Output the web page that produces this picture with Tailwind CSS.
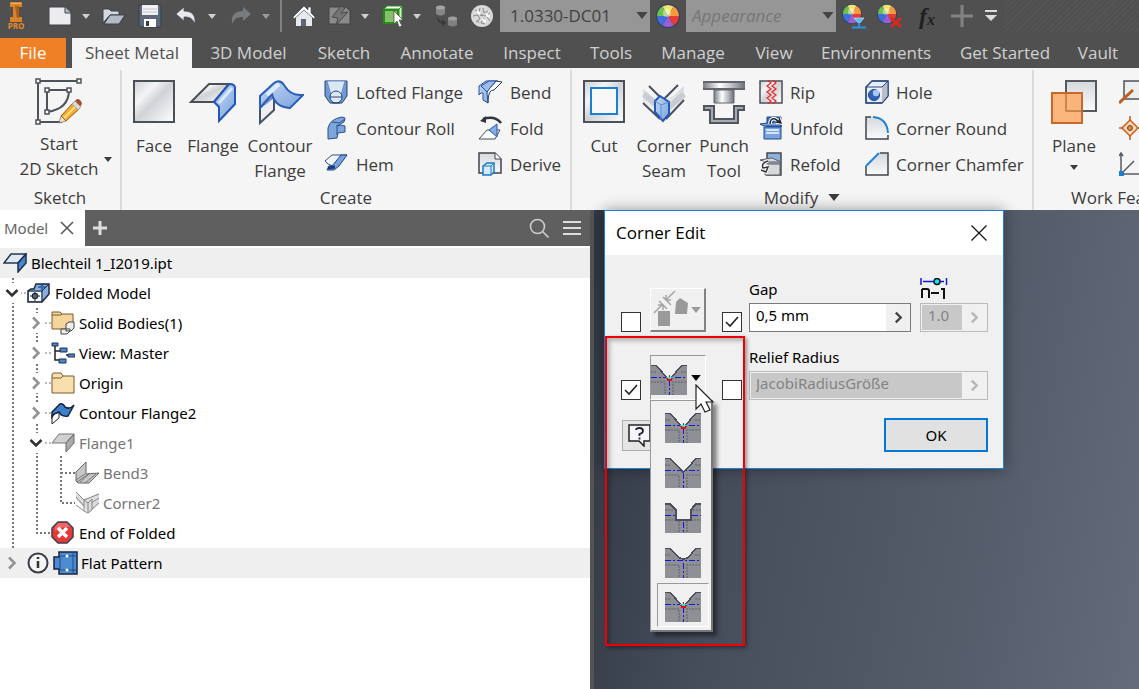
<!DOCTYPE html>
<html lang="en">
<head>
<meta charset="utf-8">
<title>Sheet Metal - Corner Edit</title>
<script src="https://cdn.jsdelivr.net/npm/@tailwindcss/browser@4"></script>
</head>
<body class="flex h-screen flex-col overflow-hidden bg-[#505050] font-['Open_Sans','Noto_Sans',sans-serif] text-[17px] text-[#3c3c3c]">

<svg class="absolute h-0 w-0" aria-hidden="true">
  <defs>
    <linearGradient id="steel" x1="0" y1="0" x2="1" y2="1"><stop offset="0" stop-color="#cfd1d4"/><stop offset=".3" stop-color="#f4f4f5"/><stop offset=".5" stop-color="#d0d2d6"/><stop offset="1" stop-color="#fff"/></linearGradient>
    <linearGradient id="sheet" x1="0" y1="0" x2="0" y2="1"><stop offset="0" stop-color="#d5d8dc"/><stop offset="1" stop-color="#fafafa"/></linearGradient>
    <linearGradient id="blue" x1="0" y1="0" x2="1" y2="1"><stop offset="0" stop-color="#c3d8f3"/><stop offset="1" stop-color="#7ba3dc"/></linearGradient>
    <linearGradient id="chrome" x1="0" y1="0" x2="1" y2="0"><stop offset="0" stop-color="#777c85"/><stop offset=".4" stop-color="#fff"/><stop offset=".7" stop-color="#b9bcc2"/><stop offset="1" stop-color="#6b7079"/></linearGradient>
    <symbol id="down" viewBox="0 0 8 5"><path d="M0 0h8L4 5z" fill="currentColor"/></symbol>
    <symbol id="wheel" viewBox="0 0 24 24">
      <circle cx="12" cy="12" r="12" fill="#2b3d68"/>
      <path d="M12 12 6.5 2.5a11 11 0 0 1 11 0z" fill="#f3e36c"/><path d="M12 12 17.500 2.500A11 11 0 0 1 23 12z" fill="#f59a3c"/><path d="M12 12H23a11 11 0 0 1-5.500 9.500z" fill="#e83b33"/><path d="M12 12l5.500 9.500a11 11 0 0 1-11 0z" fill="#9a5fd0"/><path d="M12 12 6.500 21.500A11 11 0 0 1 1 12z" fill="#3e6fdc"/><path d="M12 12H1A11 11 0 0 1 6.500 2.500z" fill="#6fbf4a"/>
      <circle cx="11" cy="9" r="4" fill="#fff" opacity=".45"/>
    </symbol>
    <symbol id="chev-r" viewBox="0 0 10 14"><path d="M2 1.500 7.500 7 2 12.500" fill="none" stroke="currentColor" stroke-width="2.600"/></symbol>
    <symbol id="chev-d" viewBox="0 0 14 10"><path d="M1.500 2 7 7.500 12.500 2" fill="none" stroke="currentColor" stroke-width="2.600"/></symbol>
    <!-- bend lines shared by the relief shapes -->
    <symbol id="corner-body" viewBox="0 0 36 30" shape-rendering="crispEdges">
      <path d="M0 7h6M30 7h6M0 17h14v13M22 30V17h14" stroke="#77787f" stroke-width="2" stroke-dasharray="2 1" fill="none"/>
      <path d="M0 12.500h36M18.500 15v15" stroke="#1515e0" stroke-dasharray="6 2 2 2"/>
    </symbol>
    <symbol id="corner-red" viewBox="0 0 36 30" shape-rendering="crispEdges">
      <path d="M0 0h5l12 13h3L31 0h5v30H0z" fill="#8f9096"/><use href="#corner-body"/>
      <path d="M6 0 17 12h3L30 0z" fill="#f0f0f0"/>
      <path d="M0 .5h5l11 12M36 .5h-5l-11 12" stroke="#4d4e5c" stroke-width="1.500" fill="none"/>
      <path d="M15 12h7v2h-7z" fill="#0cf0f8"/><path d="M15 13h2v1h3v-1h2v1h-1v2h-5v-2h-1zM18 10h1v2h-1z" fill="#f00"/>
    </symbol>
    <symbol id="corner-v" viewBox="0 0 36 30" shape-rendering="crispEdges">
      <path d="M0 0h5l13 14L31 0h5v30H0z" fill="#8f9096"/><use href="#corner-body"/>
      <path d="M6 0 17 12h3L30 0z" fill="#f0f0f0"/>
      <path d="M0 .5h5l13.500 14L31 .5h5" stroke="#4d4e5c" stroke-width="1.500" fill="none"/>
    </symbol>
    <symbol id="corner-square" viewBox="0 0 36 30" shape-rendering="crispEdges">
      <path d="M0 0h5l5 6v11h16V6l5-6h5v30H0z" fill="#8f9096"/>
      <path d="M0 7h8M28 7h8M0 17h10M26 17h10M14 18v12M22 18v12" stroke="#77787f" stroke-width="2" stroke-dasharray="2 1"/>
      <path d="M0 12.500h10M27 12.500h9M18.500 19v11" stroke="#1515e0" stroke-dasharray="6 2 2 2"/>
      <path d="M0 .5h5l6 6.500v10h15V7L31 .5h5" stroke="#4d4e5c" stroke-width="2" fill="none"/>
    </symbol>
    <symbol id="corner-round" viewBox="0 0 36 30" shape-rendering="crispEdges">
      <path d="M0 0h5l10 10q3 2 7 0L31 0h5v30H0z" fill="#8f9096"/><use href="#corner-body"/>
      <path d="M6 0l9 9q4 2 7 0l8-9z" fill="#f0f0f0"/>
      <path d="M0 .5h5l9 9q4.500 3 9 0l8-9h5" stroke="#4d4e5c" stroke-width="1.500" fill="none"/>
    </symbol>
  </defs>
</svg>

<!-- quick access toolbar -->
<header class="flex h-[38px] shrink-0 items-start overflow-hidden text-[#cfcfcf] [&>button]:flex [&>button]:h-8 [&>button]:shrink-0 [&>button]:items-center [&>button]:justify-center">
  <button aria-label="Application menu" class="w-8 flex-col text-[8px] leading-[8px] font-bold text-[#e98a2b]">
    <svg width="12" height="20" viewBox="0 0 12 20"><path d="M0 0h12v5H9v10h3v5H0v-5h3V5H0z" fill="#d9822b"/><path d="M5 4h4v12H7z" fill="#a85c14"/><path d="M1 1h10v1H1z" fill="#f7b263"/></svg>PRO
  </button>
  <button aria-label="New" class="ml-3 w-8"><svg width="24" height="20" viewBox="0 0 24 20"><path d="M1 1h16l6 6v12H1z" fill="#ececee" stroke="#3f4450"/><path d="M17 1v6h6" fill="#b9bcc5" stroke="#3f4450"/></svg></button>
  <button aria-label="New options" class="w-5"><svg width="8" height="5"><use href="#down"/></svg></button>
  <button aria-label="Open" class="w-9"><svg width="24" height="17" viewBox="0 0 24 17"><path d="M1 15V1h6l2 2h8v4H8z" fill="#d5d8dd" stroke="#3b414d"/><path d="M2 16 8 7h15l-6 9z" fill="#b4bbc5" stroke="#3b414d"/></svg></button>
  <button aria-label="Save" class="w-9"><svg width="24" height="24" viewBox="0 0 24 24"><path d="M1 1h22v22H3l-2-2z" fill="#5d6878" stroke="#353d4b"/><path d="M4 1h16v10H4z" fill="#f1f1f3"/><path d="M5 5h14M5 8h14" stroke="#c5c7cc"/><path d="M6 15h12v8H6z" fill="#fff"/><path d="M8 17h3v5H8z" fill="#353d4b"/></svg></button>
  <button aria-label="Undo" class="w-9"><svg width="22" height="18" viewBox="0 0 22 18"><path d="M1 7 9 0v4c8 0 12 4 11 13-3-6-5-7-11-7v4z" fill="#e9e9eb" stroke="#444a56" stroke-width=".8"/></svg></button>
  <button aria-label="Undo list" class="w-4"><svg width="8" height="5"><use href="#down"/></svg></button>
  <button aria-label="Redo" class="w-[42px]"><svg width="22" height="18" viewBox="0 0 22 18"><path d="M21 7 13 0v4C5 4 1 8 2 17c3-6 5-7 11-7v4z" fill="#777a7e"/></svg></button>
  <button aria-label="Redo list" class="w-2 text-[#9a9a9a]"><svg width="8" height="5"><use href="#down"/></svg></button>
  <span class="ml-2.5 h-8 w-0.5 shrink-0 bg-[#808080]"></span>
  <button aria-label="Home" class="ml-1 w-9"><svg width="22" height="22" viewBox="0 0 22 22"><path d="M3 10v11h5v-7h5v7h6V10l-8-7z" fill="#e9e9eb"/><path d="M0 12 11 1l4 4V2h3v6l4 4-1 2L11 5 1 14z" fill="#fff" stroke="#3e4a60" stroke-width=".7"/><path d="M8 14h5v7H8z" fill="#596579"/></svg></button>
  <button aria-label="Update" class="w-9"><svg width="24" height="22" viewBox="0 0 24 22"><path d="M1 2h17l4 4v13H1z" fill="#8a8a8a" stroke="#454545"/><path d="M4 12 13 1l4 2-4 5 7-1L8 20l2-7z" fill="#747474" stroke="#484848"/></svg></button>
  <button aria-label="Update options" class="w-3.5"><svg width="8" height="5"><use href="#down"/></svg></button>
  <button aria-label="Select" class="ml-1 w-9"><svg width="22" height="24" viewBox="0 0 22 24"><path d="M4 2h15l-3 3H1z" fill="#fff" stroke="#2f8f1f"/><path d="M16 5l3-3v13l-3 4z" fill="#d5ecd0" stroke="#2f8f1f"/><path d="M1 6h14v13H1z" fill="#84bf6c" stroke="#248f14" stroke-width="2"/><path d="M11 7v13l3-3 2 6 3-1-3-6h4z" fill="#fff" stroke="#444" stroke-width=".7"/></svg></button>
  <button aria-label="Select options" class="w-2.5"><svg width="8" height="5"><use href="#down"/></svg></button>
  <button aria-label="Relationships" class="w-[50px]"><svg width="24" height="22" viewBox="0 0 24 22"><path d="M1 2q4.500-3 9 0v7q-4.500 3-9 0z" fill="#858585"/><ellipse cx="5.500" cy="2.500" rx="4.500" ry="2" fill="#a5a5a5"/><path d="M13 13q4.500-3 9 0v7q-4.500 3-9 0z" fill="#808080"/><ellipse cx="17.500" cy="13.500" rx="4.500" ry="2" fill="#9c9c9c"/><path d="M3 13q0 5 6 5M7 15l3 3-3 3" fill="none" stroke="#383838" stroke-width="1.500"/></svg></button>
  <button aria-label="Material browser" class="w-5"><svg class="shrink-0" width="22" height="22" viewBox="0 0 22 22"><circle cx="11" cy="11" r="11" fill="#d9d9d9"/><path d="m4 5 4 2 1-4M12 3l1 5 4-2M2 11l5-1 2 4-4 3M10 9l4 2 5-3M13 13l-3 5 4 1M16 12l3 4M8 18l-2-3M12 11l-3-1" stroke="#8b8b8b" fill="none"/><path d="m6 6 3 3M15 9l3 3M11 14l4 3" stroke="#fff" stroke-width="2"/></svg></button>
  <label class="relative ml-2 block h-8 w-[150px] shrink-0 bg-[#969696] text-[#424242]">
    <select aria-label="Material" class="h-full w-full appearance-none bg-transparent pl-2.5 text-[17px]"><option>1.0330-DC01</option></select>
    <svg class="pointer-events-none absolute top-3 right-0.5 text-[#444]" width="12" height="7"><use href="#down"/></svg>
  </label>
  <button aria-label="Appearance browser" class="w-9"><svg width="24" height="24"><use href="#wheel"/></svg></button>
  <label class="relative block h-8 w-[150px] shrink-0 bg-[#969696] text-[#767676]">
    <select aria-label="Appearance" class="h-full w-full appearance-none bg-transparent pl-1.5 text-[17px] italic"><option>Appearance</option></select>
    <svg class="pointer-events-none absolute top-3 right-0.5 text-[#444]" width="12" height="7"><use href="#down"/></svg>
  </label>
  <button aria-label="Adjust appearance" class="w-9"><svg width="24" height="26" viewBox="0 0 24 26"><use href="#wheel" x="0" y="1" width="20" height="20"/><path d="M12 15h10l-5 6z" fill="#4fc0fa" stroke="#dff3ff" stroke-width=".6"/><path d="M17 20v4M10 24.500h14" stroke="#2d8fe0" stroke-width="2"/></svg></button>
  <button aria-label="Clear appearance" class="w-9"><svg width="26" height="26" viewBox="0 0 26 26"><use href="#wheel" x="0" y="1" width="20" height="20"/><path d="m14 15 10 9M24 15l-10 9" stroke="#e0261c" stroke-width="2.500"/></svg></button>
  <button aria-label="Parameters" class="w-[38px] font-['Liberation_Serif',serif] text-2xl leading-6 font-bold text-[#202020] italic">f<sub class="text-base leading-4">x</sub></button>
  <button aria-label="Add" class="w-8"><svg width="22" height="22" viewBox="0 0 22 22"><path d="M11 0v22M0 11h22" stroke="#828282" stroke-width="3"/></svg></button>
  <button aria-label="Customize toolbar" class="w-[26px]"><svg width="12" height="12" viewBox="0 0 12 12"><path d="M0 1h12" stroke="#ddd" stroke-width="2"/><path d="M0 5h12l-6 6z" fill="#ddd"/></svg></button>
  <span class="h-8 flex-1 bg-[repeating-linear-gradient(135deg,#505050_0_3px,#565656_3px_4px)]"></span>
</header>

<!-- ribbon tabs -->
<nav class="flex h-[30px] shrink-0 overflow-hidden text-[#d0d0d0] [&>a]:flex [&>a]:shrink-0 [&>a]:items-center [&>a]:justify-center [&>a]:whitespace-nowrap">
  <a href="#" class="w-[66px] bg-[#f08025] text-white">File</a>
  <a href="#" class="mx-1.5 w-[120px] bg-[#f5f5f5] text-[#505050]">Sheet Metal</a>
  <a href="#" class="w-[101px]">3D Model</a>
  <a href="#" class="w-[90px]">Sketch</a>
  <a href="#" class="w-[96px]">Annotate</a>
  <a href="#" class="w-[94px]">Inspect</a>
  <a href="#" class="w-[64px]">Tools</a>
  <a href="#" class="w-[100px]">Manage</a>
  <a href="#" class="w-[62px]">View</a>
  <a href="#" class="w-[142px]">Environments</a>
  <a href="#" class="w-[116px]">Get Started</a>
  <a href="#" class="w-[70px]">Vault</a>
</nav>

<!-- ribbon -->
<section class="flex h-[142px] shrink-0 overflow-hidden bg-[#f5f5f5] pt-0.5 leading-[25px] whitespace-nowrap">
  <div class="flex w-[122px] shrink-0 flex-col border-r-2 border-[#dcdcdc]">
    <button class="relative flex h-[116px] flex-col items-center pt-2 pr-0.5">
      <svg width="48" height="48" viewBox="0 0 48 48"><path d="M3 44V3h41M3 44h24M12 12h22M12 12v22M34 12q0 19-22 22" fill="none" stroke="#4d525b" stroke-width="2"/><g fill="#fff" stroke="#4d525b" stroke-width="1.500"><path d="M1 1h4v4H1zM42 1h4v4h-4zM1 42h4v4H1zM10 10h4v4h-4zM32 10h4v4h-4zM10 32h4v4h-4z"/></g><path d="M26 38 39 24l6 6-14 13z" fill="#f5ad31" stroke="#9c5310"/><path d="m29 40 13-13" stroke="#ffdf7d" stroke-width="2"/><path d="m39 24 3-3q4 0 5 5l-3 4z" fill="#a84d28"/><path d="m37 26 3-3 6 6-3 3z" fill="#d8d8d8" stroke="#888" stroke-width=".5"/><path d="m26 38-2 7 7-2z" fill="#f6e3c2" stroke="#666" stroke-width=".7"/></svg>
      <span class="mt-[5px]">Start<br>2D Sketch</span>
      <svg class="absolute top-[87px] right-2" width="8" height="5"><use href="#down"/></svg>
    </button>
    <span class="text-center leading-[25px]">Sketch</span>
  </div>

  <div class="flex w-[450px] shrink-0 flex-col border-r-2 border-[#dcdcdc]">
    <div class="flex h-[116px] [&>button]:flex [&>button]:flex-col [&>button]:items-center [&>button]:gap-[7px] [&>button]:pt-2">
      <button class="w-16"><svg width="44" height="48" viewBox="0 0 44 48"><path d="M2 3h40v41H2z" fill="url(#steel)" stroke="#4b4f57" stroke-width="2"/></svg>Face</button>
      <button class="w-[54px]"><svg width="48" height="48" viewBox="0 0 48 48"><path d="M2 24 20 6h20L25 24z" fill="url(#steel)" stroke="#4b4f57" stroke-width="2"/><path d="M25 24 40 6q7 0 6 5v15L30 43V29z" fill="url(#blue)" stroke="#2355b8" stroke-width="2"/><path d="m30 25 13-15" stroke="#dbe8fa" stroke-width="3"/></svg>Flange</button>
      <button class="w-20"><svg width="48" height="48" viewBox="0 0 48 48"><path d="M4 20v25l14-13V20z" fill="#eceef2" stroke="#44536b" stroke-width="2"/><path d="M4 31V18L18 5v15z" fill="#6f8fc4"/><path d="M4 30V18L18 5q6-4 10 2 6 11 19 10L34 30q-15-1-18-14L4 30z" fill="url(#blue)" stroke="#2c5fbc" stroke-width="2"/><path d="m11 17 12-11" stroke="#e0edfd" stroke-width="4"/></svg><span>Contour<br>Flange</span></button>
      <div class="ml-1 grid auto-rows-[36px] grid-cols-[154px_auto] pt-1 [&>button]:flex [&>button]:items-center [&>button]:gap-2">
        <button><svg width="24" height="24" viewBox="0 0 24 24"><path d="M1 1h22v15l-5 7H6l-5-7z" fill="#7299d3" stroke="#25457c"/><path d="M3 1h18l-4 14H7z" fill="#dce8f6" stroke="#688fc8"/><circle cx="12" cy="17" r="6" fill="#dce8f6" stroke="#284779"/><path d="M6 17h12M8 23h8" stroke="#284779"/></svg>Lofted Flange</button>
        <button><svg width="24" height="24" viewBox="0 0 24 24"><path d="M1 15V6l7-5h12l-8 7q-3 1-3 5l1 10-5-3v-7q-2-1-4 2z" fill="url(#blue)" stroke="#234e9c"/><path d="M12 8 18 1l6 1-8 8q-6-1-6 13" fill="#fff" stroke="#253858"/><path d="m12 8 6-7h-7L3 6l6 6z" fill="#9dbce9" stroke="#234e9c"/></svg>Bend</button>
        <button><svg width="24" height="24" viewBox="0 0 24 24"><path d="M4 23V12Q6 3 18 1l3 1-1 4-7 4q3-2 8 0v6l-7 1-1 5z" fill="#7fa6da" stroke="#274f91"/><path d="M13 9v10M8 6l7 1 6-4" fill="none" stroke="#274f91"/></svg>Contour Roll</button>
        <button><svg width="24" height="24" viewBox="0 0 24 24"><path d="m1 23 8-9h13l-5 9z" fill="#fff" stroke="#424b5c"/><path d="m11 14 8-6v13z" fill="#83abe4" stroke="#275bac"/><path d="M5 3q12-4 18 4" fill="none" stroke="#30343c" stroke-width="2.500"/><path d="M2 5 8 0v7z" fill="#30343c"/></svg>Fold</button>
        <button><svg width="24" height="24" viewBox="0 0 24 24"><path d="M1 9 8 3h15L12 13q-4 2-8-1z" fill="#f1f5fa" stroke="#344c78"/><path d="M8 14 17 3h6l-8 11-5 4H3l2-4z" fill="#78a1dd" stroke="#1f468d"/><path d="m4 16 7-1" stroke="#173c79" stroke-width="3"/></svg>Hem</button>
        <button><svg width="24" height="24" viewBox="0 0 24 24"><path d="M1 1h16l6 6v14H1z" fill="url(#sheet)" stroke="#3f434c" stroke-width="1.500"/><path d="M17 1v6h6" fill="#fff" stroke="#3f434c"/><path d="m5 14 4-3h7v9l-3 3H5z" fill="#d5ebfc" stroke="#1d78c5" stroke-width="1.500"/><path d="M5 14h8v9M13 14l3-3" fill="none" stroke="#1d78c5"/></svg>Derive</button>
      </div>
    </div>
    <span class="text-center leading-[25px]">Create</span>
  </div>

  <div class="flex w-[462px] shrink-0 flex-col border-r-2 border-[#dcdcdc]">
    <div class="flex h-[116px] [&>button]:flex [&>button]:flex-col [&>button]:items-center [&>button]:gap-[7px] [&>button]:pt-2">
      <button class="w-16"><svg width="44" height="48" viewBox="0 0 44 48"><path d="M2 3h40v41H2z" fill="url(#steel)" stroke="#4b4f57" stroke-width="2"/><path d="M9 10h26v26H9z" fill="#f8f8f8" stroke="#1b7fd4" stroke-width="2"/></svg>Cut</button>
      <button class="w-14"><svg width="44" height="48" viewBox="0 0 44 48"><path d="M1 11 13 21l9 1 9-4 11-10v13L24 42H20L1 25z" fill="url(#sheet)"/><path d="m2 16 16 14M42 16 26 30" stroke="#c9ccd2" stroke-width="6"/><path d="m7 8 14 14 15-15M1 25l17 16M42 22 24 41" stroke="#4a5160" stroke-width="2" fill="none"/><path d="m13 23 5-5 9 6v12l-6 7-8-9z" fill="url(#blue)" stroke="#2459b8" stroke-width="2"/><path d="m13 23 6 4 8-3M19 27v14" stroke="#5c8cd4" fill="none"/></svg><span>Corner<br>Seam</span></button>
      <button class="w-16"><svg width="44" height="48" viewBox="0 0 44 48"><path d="M1 4h42v8H1z" fill="url(#chrome)"/><path d="M1 4h42M1 11h42" stroke="#60656e" stroke-width="2"/><path d="M12 12h20v13H12z" fill="url(#chrome)" stroke="#60656e"/><path d="M1 30h9v13h24V30h9" fill="none" stroke="#50545c" stroke-width="6"/><path d="M3 30h7v13h24V30h7" fill="none" stroke="#a6abb2" stroke-width="2"/></svg><span>Punch<br>Tool</span></button>
      <div class="ml-[3px] grid auto-rows-[36px] grid-cols-[106px_auto] pt-1 [&>button]:flex [&>button]:items-center [&>button]:gap-[7px]">
        <button><svg width="24" height="24" viewBox="0 0 24 24"><path d="M1 1h22v22H1z" fill="url(#steel)" stroke="#4b4f57" stroke-width="1.500"/><path d="m9 0 3 3-4 3 4 3-4 3 4 3-4 3 4 3-3 3M14 0l3 3-4 3 4 3-4 3 4 3-4 3 4 3-3 3" fill="none" stroke="#ed2424" stroke-width="1.200"/></svg>Rip</button>
        <button><svg width="24" height="24" viewBox="0 0 24 24"><path d="M1 7 7 1h16v15l-6 7H1z" fill="#e9edf3" stroke="#26487e" stroke-width="1.500"/><path d="M17 7l6-6v15l-6 7z" fill="#b9bec8"/><path d="M1 7h16l6-6v15l-6 7H1zM1 7l6-6h16" fill="none" stroke="#26487e"/><circle cx="9" cy="15" r="5.500" fill="#2f62bf" stroke="#1d418a"/><circle cx="11" cy="13" r="3.200" fill="#a9c8f4"/></svg>Hole</button>
        <button><svg width="24" height="24" viewBox="0 0 24 24"><path d="M8 1h14v10H8z" fill="#3a71c5" stroke="#1f4587"/><path d="m1 8 15-2 7 4H5zM5 11h17v12H5z" fill="#79a4e0" stroke="#22498d"/><path d="M7 14h13M7 17h13" stroke="#d5e5f8" stroke-width="2"/><path d="M11 8q0-6 5-5l5 3M20 2l2 5-5-1" fill="none" stroke="#fff" stroke-width="3.500"/><path d="M11 8q0-6 5-5l5 3M20 2l2 5-5-1" fill="none" stroke="#26292f" stroke-width="1.500"/></svg>Unfold</button>
        <button><svg width="24" height="24" viewBox="0 0 24 24"><path d="M1 1h7q15 1 15 17v5H1z" fill="url(#sheet)"/><path d="M6 1H1v22h22v-4" fill="none" stroke="#40444c" stroke-width="1.500"/><path d="M8 1q14 1 15 16" fill="none" stroke="#1f83d8" stroke-width="2"/></svg>Corner Round</button>
        <button><svg width="24" height="24" viewBox="0 0 24 24"><path d="M8 1h14v22H8z" fill="#91afd8" stroke="#44494f" stroke-width="1.500"/><path d="m1 8 12-2 9 4H7zM6 12h15v11H6z" fill="#d9d9d9" stroke="#5c5f64"/><path d="M9 9q-6 2-4 6l4-1M9 14l-2 6-5-2" fill="none" stroke="#fff" stroke-width="3.500"/><path d="M9 9q-7 2-5 7l5-1-2 5-5-2" fill="none" stroke="#33363b" stroke-width="1.500"/></svg>Refold</button>
        <button><svg width="24" height="24" viewBox="0 0 24 24"><path d="M14 1h9v22H1V14z" fill="url(#sheet)"/><path d="M15 1h8v22H1v-9" fill="none" stroke="#40444c" stroke-width="1.500"/><path d="M1 14 14 1" stroke="#1f83d8" stroke-width="2"/></svg>Corner Chamfer</button>
      </div>
    </div>
    <button class="flex items-center justify-center gap-2.5 leading-[25px]">Modify<svg width="12" height="7"><use href="#down"/></svg></button>
  </div>

  <div class="flex min-w-0 flex-1 flex-col overflow-hidden">
    <div class="flex h-[116px]">
      <button class="ml-[11px] flex w-[58px] shrink-0 flex-col items-center gap-[7px] pt-2"><svg width="48" height="48" viewBox="0 0 48 48"><path d="M16 3h30v30H16z" fill="url(#sheet)" stroke="#555a62" stroke-width="2"/><path d="M2 15h30v30H2z" fill="#fbae70" fill-opacity=".9" stroke="#c9682c" stroke-width="2"/><path d="M16 15v18h16" fill="none" stroke="#a8672f"/></svg><span>Plane</span><svg width="8" height="5"><use href="#down"/></svg></button>
      <div class="ml-4 grid auto-rows-[36px] items-center pt-1 [&>button]:w-6">
        <button aria-label="Axis"><svg width="24" height="24" viewBox="0 0 24 24"><path d="M5 1h19v18H5z" fill="#edeef0" stroke="#4d525a" stroke-width="1.500"/><path d="m0 23 14-13" stroke="#ba5f1f" stroke-width="3"/></svg></button>
        <button aria-label="Point"><svg width="24" height="24" viewBox="0 0 24 24"><path d="M11 4l8 8-8 8-8-8z" fill="#f8d7ba" stroke="#c3601d" stroke-width="1.500"/><path d="M11 0v5M11 19v5M0 12h4M18 12h6" stroke="#c3601d" stroke-width="1.500"/><circle cx="11" cy="12" r="2.500" fill="#d98a4f" stroke="#874011"/></svg></button>
        <button aria-label="UCS"><svg width="24" height="24" viewBox="0 0 24 24"><path d="M2 22V1M0 4l2-3 2 3M2 22h22M2 22 15 9" fill="none" stroke="#555b64" stroke-width="1.500"/><path d="M0 19h5v5H0z" fill="#1d7dcc"/></svg></button>
      </div>
    </div>
    <span class="pl-[37px] leading-[25px]">Work Features</span>
  </div>
</section>

<main class="flex min-h-0 flex-1">
  <!-- model browser -->
  <aside class="flex w-[590px] shrink-0 flex-col bg-white font-['Noto_Sans','Open_Sans',sans-serif] text-[15px] text-black">
    <div class="mb-0.5 flex h-9 shrink-0 items-center bg-[#5f5f5f] text-[#d8d8d8]">
      <div class="flex h-full w-[85px] items-center gap-3 bg-white pl-1 text-[#666]">Model
        <button aria-label="Close panel"><svg width="14" height="14" viewBox="0 0 14 14"><path d="m1 1 12 12M13 1 1 13" stroke="#555" stroke-width="1.500"/></svg></button>
      </div>
      <button aria-label="Add panel" class="ml-2"><svg width="14" height="14" viewBox="0 0 14 14"><path d="M7 0v14M0 7h14" stroke="#ddd" stroke-width="3"/></svg></button>
      <button aria-label="Search" class="mr-3.5 ml-auto"><svg width="20" height="20" viewBox="0 0 20 20"><circle cx="8.500" cy="8.500" r="7" fill="none" stroke="#ccc" stroke-width="1.600"/><path d="m13.500 13.500 6 6" stroke="#ccc" stroke-width="1.600"/></svg></button>
      <button aria-label="Menu" class="mr-[9px]"><svg width="18" height="14" viewBox="0 0 18 14"><path d="M0 1h18M0 7h18M0 13h18" stroke="#ddd" stroke-width="2"/></svg></button>
    </div>
    <div class="relative">
      <svg class="absolute top-0 left-0" width="100" height="330" viewBox="0 0 100 330"><g stroke="#777" stroke-width="2" stroke-dasharray="2 2" fill="none"><path d="M13 30v270M37 60v225h14M61 208v47h14M61 225h14"/><path d="M20 45h8M45 75h6M45 105h6M45 135h6M45 165h6M45 195h6M20 315h8" stroke-width="1"/></g></svg>
      <ul class="relative [&_button]:mx-[3px] [&_button]:flex [&_button]:h-5 [&_button]:w-[18px] [&_button]:items-center [&_button]:justify-center [&_button]:bg-white [&_button]:text-[#949494] [&_svg]:shrink-0 [&>li]:flex [&>li]:h-[30px] [&>li]:items-center">
        <li class="gap-1 bg-[#efefef] pl-[3px]"><svg width="24" height="20" viewBox="0 0 24 20"><path d="M1 10 8 1h15L15 10z" fill="#dfe8f2" stroke="#26364f" stroke-width="1.500"/><path d="m15 10 8-9v9l-8 9z" fill="#4d83c9" stroke="#1c3050" stroke-width="1.500"/></svg>Blechteil 1_I2019.ipt</li>
        <li><button aria-label="Collapse"><svg class="text-[#333]" width="14" height="10"><use href="#chev-d"/></svg></button><svg class="mr-1 ml-[3px]" width="24" height="20" viewBox="0 0 24 20"><path d="M7 6 9 1h13v10l-7 8H1V8l3-2z" fill="#88b0e3" stroke="#1c2638" stroke-width="1.500"/><path d="M2 9h12v9H2z" fill="#fff"/><path d="M1 8h14l7-7M15 8v11" stroke="#1c2638" fill="none"/><circle cx="8" cy="13" r="2.500" fill="none" stroke="#1c2638" stroke-width="1.500"/><path d="M8 9v9M3 13h10M15 1v6M11 4h8" stroke="#1c2638"/><circle cx="15" cy="4" r="2" fill="#2f6db8"/></svg>Folded Model</li>
        <li class="pl-6"><button aria-label="Expand"><svg width="10" height="14"><use href="#chev-r"/></svg></button><svg class="mr-1 ml-[3px]" width="24" height="24" viewBox="0 0 24 24"><path d="M1 1h8l2 2h11v15H1z" fill="#f5d59b" stroke="#7a5b2e"/><path d="M1 4h9l1-1" fill="none" stroke="#7a5b2e"/><path d="m15 13 3-2h5v6l-3 3h-5zM10 18h9v2l-3 3h-6z" fill="#eee" stroke="#444"/></svg>Solid Bodies(1)</li>
        <li class="pl-6"><button aria-label="Expand"><svg width="10" height="14"><use href="#chev-r"/></svg></button><svg class="mr-1 ml-[3px]" width="24" height="24" viewBox="0 0 24 24"><path d="M4 5v14h4M4 10h6M15 14h4" fill="none" stroke="#222" stroke-width="1.500"/><g fill="#4d86cc" stroke="#1c2e4a"><path d="M1 2h6v3H1zM9 7h7v4H9zM8 18h7v4H8zM17 13h7v3h-7z"/></g></svg>View: Master</li>
        <li class="pl-6"><button aria-label="Expand"><svg width="10" height="14"><use href="#chev-r"/></svg></button><svg class="mr-1 ml-[3px]" width="24" height="22" viewBox="0 0 24 22"><path d="M1 3q0-2 2-2h7l2 3h11v17H1z" fill="#f9dfae" stroke="#7a5b2e"/><path d="M1 6h9l2-2" fill="none" stroke="#7a5b2e"/></svg>Origin</li>
        <li class="pl-6"><button aria-label="Expand"><svg width="10" height="14"><use href="#chev-r"/></svg></button><svg class="mr-1 ml-[3px]" width="24" height="24" viewBox="0 0 24 24"><path d="m1 23 7-6v-6l-7 3z" fill="#fff" stroke="#222"/><path d="M1 16v-5l8-8q3-1 5 3 5 3 9-2l-6 11q-7 1-9-4l-5 2z" fill="#3d7fcb" stroke="#18243a" stroke-width="1.500"/></svg>Contour Flange2</li>
        <li class="pl-6 text-[#757575]"><button aria-label="Collapse"><svg class="text-[#333]" width="14" height="10"><use href="#chev-d"/></svg></button><svg class="mr-1 ml-[3px]" width="24" height="20" viewBox="0 0 24 20"><path d="M1 10 8 1h15L15 10z" fill="#d0d0d0" stroke="#777"/><path d="m15 10 8-9v9l-8 9z" fill="#aaa" stroke="#666"/></svg>Flange1</li>
        <li class="gap-1 pl-[75px] text-[#757575]"><svg width="24" height="24" viewBox="0 0 24 24"><path d="M1 11 11 1v12l13-1-10 10H3l-2-2z" fill="#c6c6c6" stroke="#666"/><path d="m1 19 9-6M5 21l9-8M2 21l13-9M10 22l11-9" stroke="#777"/></svg>Bend3</li>
        <li class="gap-1 pl-[75px] text-[#757575]"><svg width="24" height="24" viewBox="0 0 24 24"><path d="m1 8 9 10 3 4 4-3 7-6V2l-9 4-7 2-7-6z" fill="#ddd"/><path d="m1 1 8 8 5-2 10-4M1 6l8 9M1 14l8 6M16 12l8-5M17 18l7-6M9 9v11l4 2 4-3V8M13 12v10M9 9l4 3 4-4" fill="none" stroke="#888"/></svg>Corner2</li>
        <li class="gap-1 pl-[51px]"><svg width="24" height="24" viewBox="0 0 24 24"><path d="M7 1h9l6 6v9l-6 6H7l-6-6V7z" fill="#e93636" stroke="#39424c" stroke-width="1.500"/><path d="m7 7 9 9M16 7l-9 9" stroke="#fff" stroke-width="3.500"/><path d="M7 2h9l4 4q-8-1-16 4V6z" fill="#fff" opacity=".25"/></svg>End of Folded</li>
        <li class="bg-[#efefef] [&>button]:bg-transparent"><button aria-label="Expand"><svg width="10" height="14"><use href="#chev-r"/></svg></button><svg class="ml-[3px]" width="22" height="22" viewBox="0 0 22 22"><circle cx="11" cy="11" r="9.500" fill="#f5f5f5" stroke="#383e48" stroke-width="2"/><path d="M11 9v7M11 5v2" stroke="#333" stroke-width="2.500"/></svg><svg class="mr-[3px] ml-1" width="25" height="24" viewBox="0 0 25 24"><path d="M1 6h5V1h18v22H6v-5H1z" fill="#4d8cd2" stroke="#17263c" stroke-width="1.500"/><path d="M7 5h16M7 19h16M7 6v12M20 1v22" stroke="#1e4e86"/><circle cx="14" cy="5" r="1.500" fill="#fff"/><circle cx="14" cy="19" r="1.500" fill="#fff"/></svg>Flat Pattern</li>
      </ul>
    </div>
  </aside>

  <!-- graphics window -->
  <section class="relative min-w-0 flex-1 border-l-4 border-[#535353] bg-[linear-gradient(100deg,#303743_0%,#474e5b_30%,#555c6a_70%,#646b7b_100%)]">
    <div role="dialog" aria-labelledby="dlg-title" class="absolute top-0 left-2.5 w-[400px] border border-[#1883d7] bg-[#f0f0f0] font-['Noto_Sans','Open_Sans',sans-serif] text-[15px] text-black shadow-[0_0_14px_rgba(0,0,0,0.4)]">
      <div class="flex h-11 items-center justify-between bg-white pr-4 pl-[11px]">
        <h2 id="dlg-title" class="font-['Open_Sans',sans-serif] text-[17px]">Corner Edit</h2>
        <button aria-label="Close"><svg width="16" height="16" viewBox="0 0 16 16"><path d="m.5.5 15 15M15.500.5l-15 15" stroke="#111" stroke-width="1.200"/></svg></button>
      </div>
      <div class="flex flex-col gap-3.5 pt-[23px] pr-[15px] pb-4 pl-4">
        <div class="flex h-[54px] items-end">
          <input type="checkbox" aria-label="Override corner type" class="h-5 w-5 shrink-0 appearance-none border border-[#333] bg-white">
          <button aria-label="Corner type" class="ml-[9px] flex h-11 w-14 shrink-0 items-center gap-0.5 border border-t-white border-r-2 border-b-2 border-l-white border-r-[#828282] border-b-[#828282] pl-0.5">
            <svg width="36" height="38" viewBox="0 0 36 38"><path d="M5 20h12v15H5zM23 11l4-4 8 5-1 11H22z" fill="#999"/><path d="m1 22 8-8M14 8l8-8M6 10l8 8M10 6l8 8M5 14h5v5M13 4v5h5" stroke="#a5a5a5" stroke-width="1.500" fill="none"/></svg>
            <svg class="text-[#999]" width="10" height="6"><use href="#down"/></svg>
          </button>
          <span class="relative ml-4 h-5 w-5 shrink-0">
            <input type="checkbox" checked aria-label="Override gap" class="peer block h-5 w-5 appearance-none border border-[#333] bg-white">
            <svg class="pointer-events-none absolute top-1 left-[3px] hidden peer-checked:block" width="14" height="12" viewBox="0 0 14 12"><path d="m1 6 4 4 8-9" fill="none" stroke="#222" stroke-width="1.600"/></svg>
          </span>
          <div class="ml-[7px] flex w-[162px] flex-col">
            <label for="gap" class="leading-6">Gap</label>
            <div class="mt-0.5 flex h-[29px] border border-[#7a7a7a] bg-white">
              <input id="gap" value="0,5 mm" class="min-w-0 flex-1 px-1.5 pb-1">
              <button aria-label="Gap options" class="flex w-6 items-center justify-center bg-[#f0f0f0] text-[#444]"><svg width="9" height="13"><use href="#chev-r"/></svg></button>
            </div>
          </div>
          <div class="ml-[9px] flex w-[68px] flex-col gap-1">
            <label for="factor" aria-label="n-1"><svg width="28" height="21" viewBox="0 0 28 21"><path d="M1 0v7M26.500 0v7M3 3.500h21" stroke="#1515e0" stroke-width="1.500"/><circle cx="17" cy="3.500" r="3" fill="#0ef" stroke="#111" stroke-width="1.500"/><path d="M2 20v-9M2 11h5q2 0 2 2v7M11 15h8M21 11h3v10" fill="none" stroke="#111" stroke-width="2"/></svg></label>
            <div class="flex h-[29px] border border-[#bbb] p-px text-[#838383]">
              <input id="factor" value="1.0" disabled class="min-w-0 flex-1 bg-[#c8c8c8] pb-1 pl-1.5">
              <button disabled aria-label="Factor options" class="flex w-6 items-center justify-center text-[#b5b5b5]"><svg width="9" height="13"><use href="#chev-r"/></svg></button>
            </div>
          </div>
        </div>
        <div class="flex h-[54px] items-end">
          <span class="relative h-5 w-5 shrink-0">
            <input type="checkbox" checked aria-label="Override relief shape" class="peer block h-5 w-5 appearance-none border border-[#333] bg-white">
            <svg class="pointer-events-none absolute top-1 left-[3px] hidden peer-checked:block" width="14" height="12" viewBox="0 0 14 12"><path d="m1 6 4 4 8-9" fill="none" stroke="#222" stroke-width="1.600"/></svg>
          </span>
          <button aria-label="Relief shape" class="ml-[9px] flex h-[45px] w-14 shrink-0 items-center gap-1 border border-t-[#999] border-r-white border-b-white border-l-[#999]">
            <svg width="36" height="30" class="mt-1"><use href="#corner-red"/></svg>
            <svg width="10" height="6"><use href="#down"/></svg>
          </button>
          <input type="checkbox" aria-label="Override relief radius" class="ml-4 h-5 w-5 shrink-0 appearance-none border border-[#333] bg-white">
          <div class="ml-[7px] flex min-w-0 flex-1 flex-col">
            <label for="radius" class="leading-6">Relief Radius</label>
            <div class="mt-0.5 flex h-[29px] border border-[#bbb] p-px text-[#838383]">
              <input id="radius" value="JacobiRadiusGröße" disabled class="min-w-0 flex-1 bg-[#c8c8c8] pb-1 pl-[5px]">
              <button disabled aria-label="Radius options" class="flex w-6 items-center justify-center text-[#b5b5b5]"><svg width="9" height="13"><use href="#chev-r"/></svg></button>
            </div>
          </div>
        </div>
        <div class="mt-1 flex h-[34px] items-center justify-between">
          <button aria-label="Help" class="ml-px flex h-[31px] w-[35px] items-center justify-center border border-[#adadad] bg-[#e5e5e5]"><svg width="23" height="23" viewBox="0 0 23 23"><path d="M1 1h21v16h-6v5l-5-5H1z" fill="#f4f5fa" stroke="#222" stroke-width="1.500"/><path d="M8 6q0-2 3.500-2T15 7q0 2-3.500 3v2M11.500 13.500v2" fill="none" stroke="#222" stroke-width="1.800"/></svg></button>
          <button class="h-[34px] w-[104px] border-2 border-[#0078d7] bg-[#e1e1e1]">OK</button>
        </div>
      </div>
    </div>

    <!-- relief shape list -->
    <div role="listbox" class="absolute top-[190px] left-14 flex w-[63px] flex-col items-center gap-[15px] border border-[#999] border-r-2 border-b-2 border-r-[#777] border-b-[#777] bg-[#f0f0f0] pt-3 pb-[3px] pl-1 shadow-[4px_4px_4px_rgba(0,0,0,0.45)]">
      <button aria-label="Trim to bend"><svg width="36" height="30" class="block"><use href="#corner-red"/></svg></button>
      <button aria-label="Tear"><svg width="36" height="30" class="block"><use href="#corner-v"/></svg></button>
      <button aria-label="Square"><svg width="36" height="30" class="block"><use href="#corner-square"/></svg></button>
      <button aria-label="Round"><svg width="36" height="30" class="block"><use href="#corner-round"/></svg></button>
      <button aria-label="Arc weld" class="-mt-2.5 flex h-11 w-[52px] items-center justify-center border border-t-[#999] border-r-white border-b-white border-l-[#999] pt-1"><svg width="36" height="30" class="block"><use href="#corner-red"/></svg></button>
    </div>

    <div class="pointer-events-none absolute top-[126px] left-[11px] h-[310px] w-[140px] border-2 border-[#f00000] shadow-[2px_2px_4px_rgba(0,0,0,0.4),inset_3px_3px_4px_rgba(0,0,0,0.25)]"></div>
    <svg class="pointer-events-none absolute top-[174px] left-[101px]" width="20" height="29" viewBox="0 0 20 29"><path d="M1 1v24l5-5 4 8 5-2-4-8h7z" fill="#fff" stroke="#222" stroke-width="1.200"/></svg>
  </section>
</main>
</body>
</html>
